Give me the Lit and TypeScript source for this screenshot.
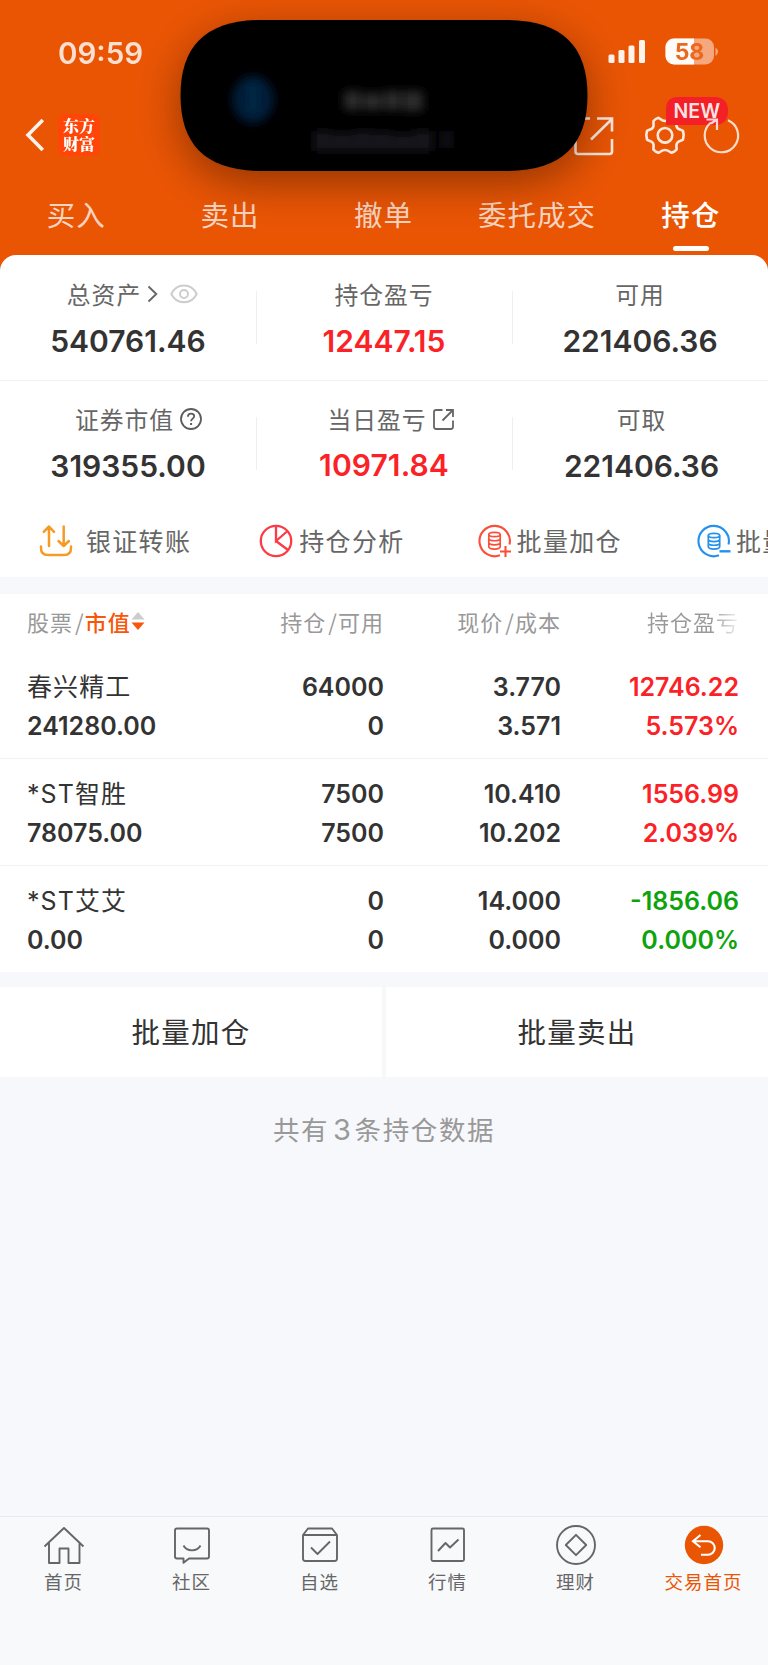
import { LitElement, html, svg, css, TemplateResult } from "lit";
import { customElement, property } from "lit/decorators.js";
import { classMap } from "lit/directives/class-map.js";

const icons: Record<string, TemplateResult> = {
  back: html`<svg width="20" height="34" viewBox="0 0 20 34" fill="none" stroke="#fff" stroke-opacity=".92" stroke-width="3.6"><path d="M17.800 2 3 17l14.800 15" /></svg>`,
  eye: html`<svg width="28" height="20" viewBox="0 0 28 20" fill="none" stroke="#ccc" stroke-width="1.9"><path d="M1.300 10C4 4.500 8.600 1.500 14 1.500S24 4.500 26.700 10C24 15.500 19.400 18.300 14 18.300S4 15.500 1.300 10Z" /><circle cx="14" cy="10" r="4" /></svg>`,
  chevron: html`<svg width="11" height="18" viewBox="0 0 11 18" fill="none" stroke="#666" stroke-width="1.900"><path d="m1.500 1.500 7.800 7.500-7.800 7.500" /></svg>`,
  help: html`<svg width="22" height="22" viewBox="0 0 22 22" fill="none" stroke="#5c5c5c" stroke-width="1.800"><circle cx="11" cy="11" r="10" /><path d="M7.900 8.700c0-1.900 1.300-3.100 3.200-3.100 1.800 0 3.100 1.100 3.100 2.700 0 2.300-3.100 2.400-3.100 4.900" /><path d="M11.100 15v2" stroke-width="2" /></svg>`,
  share: html`<svg width="21" height="21" viewBox="0 0 21 21" fill="none" stroke="#666" stroke-width="1.800"><path d="M9.500 1H3.200Q1 1 1 3.200v14.600Q1 20 3.200 20h14.600q2.200 0 2.200-2.200v-6.300M13 1h7v7M20 1 9.500 11.500" /></svg>`,
  transfer: html`<svg width="34" height="34" viewBox="0 0 34 34" fill="none" stroke="#f79a24" stroke-width="2.500" stroke-linecap="round" stroke-linejoin="round"><path d="M10 22V3M4.800 7.800 10 2.500l5 5.300M24.700 2.500v19M19.500 17l5.200 5 5.200-5M2 22.500v1.500q0 7 7 7h16q7 0 7-7v-1.500" /></svg>`,
  pie: html`<svg width="34" height="34" viewBox="0 0 34 34" fill="none" stroke="#fb3b45" stroke-width="2.300"><circle cx="17" cy="17" r="15.200" /><path d="M17 1.700V17l11.500-10M17 17l12 9" /></svg>`,
  add: html`<svg width="34" height="34" viewBox="0 0 34 34" fill="none" stroke="#f9503c" stroke-width="2.100"><path d="M31.500 20.500A15.200 15.200 0 1 0 22 31.300" /><g stroke-width="1.700"><ellipse cx="16.500" cy="10.500" rx="5.700" ry="2.200" /><path d="M10.800 10.500v12.300c0 3 11.400 3 11.400 0V10.500M10.800 14.500c0 3 11.400 3 11.400 0M10.800 18.600c0 3 11.400 3 11.400 0" /></g><path d="M22 27.500h11M27.500 22v11" /></svg>`,
  minus: html`<svg width="34" height="34" viewBox="0 0 34 34" fill="none" stroke="#2491ee" stroke-width="2.100"><path d="M31.500 20.500A15.200 15.200 0 1 0 22 31.300" /><g stroke-width="1.700"><ellipse cx="17" cy="11.500" rx="5.700" ry="2.200" /><path d="M11.300 11.500v11.300c0 3 11.400 3 11.400 0V11.500M11.300 15.300c0 3 11.400 3 11.400 0M11.300 19c0 3 11.400 3 11.400 0" /></g><path d="M22.500 27.300h11" stroke-width="2.400" /></svg>`,
};

const navIcon = (body: unknown) =>
  html`<svg width="42" height="42" viewBox="0 0 42 42" fill="none" stroke="#666" stroke-width="1.900" stroke-linejoin="round">${body}</svg>`;

const navItems = [
  { label: "首页", icon: navIcon(svg`<path d="M1.500 22.500 21 4l19.500 18.500M6 19v20h10.500V24.500h9V39H36.500V19" />`) },
  { label: "社区", icon: navIcon(svg`<path d="M6 4.500h30q2 0 2 2v26q0 2-2 2H18l-5.500 4.300V34.500H6q-2 0-2-2v-26q0-2 2-2Z" /><path d="M12.500 21.500c3.500 6.500 13.500 6.500 17 0" />`) },
  { label: "自选", icon: navIcon(svg`<path d="M4 11v23.500q0 2.500 2.500 2.500h29q2.500 0 2.500-2.500V11L33 4.500H9L4 11ZM4 11h34" /><path d="m12 23.500 6.500 6.500L31 17.500" />`) },
  { label: "行情", icon: navIcon(svg`<rect x="4.500" y="4.500" width="32.500" height="32.500" rx="1.500" /><path d="m11 27 7.500-8 4.500 4.500 8.500-8" />`) },
  { label: "理财", icon: navIcon(svg`<circle cx="21" cy="21" r="19" /><path d="M21 10.800 31.200 21 21 31.200 10.800 21Z" />`) },
  { label: "交易首页", active: true, icon: html`<svg width="42" height="42" viewBox="0 0 42 42" fill="none" stroke="#fff" stroke-width="2.100"><circle cx="21" cy="21" r="19.200" fill="#ea5504" stroke="none" /><path d="M17.500 11 10 17.300l7.500 6M10.500 17.300H25a6.700 6.700 0 0 1 0 13.500h-7" /></svg>` },
];

@customElement("trade-header")
class TradeHeader extends LitElement {
  static styles = css`
    :host { display: block; position: relative; height: 255px; overflow: hidden; background: #ea5504; color: #fff; }
    .status { display: flex; align-items: center; height: 104px; box-sizing: border-box; padding: 1px 50px 0 58px; font: 600 29.500px/30px Inter, sans-serif; }
    .time { opacity: .82; filter: blur(.6px); flex: 1; }
    .nav { display: flex; align-items: center; height: 62px; padding-left: 25px; }
    .logo { margin-left: 13px; width: 42px; height: 42px; box-sizing: border-box; padding-top: 3px; border-radius: 7px; background: #ff4608; text-align: center; font: 900 16px/18px "Noto Serif CJK SC", "Noto Sans CJK SC", sans-serif; filter: blur(.4px); }
    .tabs { display: grid; grid-template-columns: repeat(5, 1fr); height: 89px; }
    .tab { display: flex; flex-direction: column; align-items: center; padding-top: 29px; font-size: 28.500px; line-height: 38px; letter-spacing: 1px; color: rgba(255,255,255,.76); }
    .tab span { margin-right: 1px; }
    .on { color: #fff; font-weight: 500; }
    .on::after { content: ""; width: 36px; height: 5px; border-radius: 3px; background: #fff; margin-top: 13px; }
    .overlay { position: absolute; inset: 0; pointer-events: none; }
    .battery, .new { font-family: Inter, sans-serif; }
  `;
  render() {
    const tabs = ["买入", "卖出", "撤单", "委托成交", "持仓"];
    return html`
      <div class="status"><span class="time">09:59</span></div>
      <div class="nav">${icons.back}<div class="logo">东方<br />财富</div></div>
      <div class="tabs">
        ${tabs.map((t, i) => html`<div class=${classMap({ tab: true, on: i === 4 })}><span>${t}</span></div>`)}
      </div>
      <svg class="overlay" width="768" height="255" viewBox="0 0 768 255" fill="none">
        <defs>
          <filter id="shade" x="-30%" y="-50%" width="160%" height="200%"><feGaussianBlur stdDeviation="22" /></filter>
          <filter id="soft" x="-20%" y="-20%" width="140%" height="140%"><feGaussianBlur stdDeviation=".6" /></filter>
          <filter id="haze" x="-50%" y="-50%" width="200%" height="200%"><feGaussianBlur stdDeviation="5" /></filter>
          <clipPath id="charge"><rect x="660" y="30" width="34" height="40" /></clipPath>
        </defs>
        <g filter="url(#soft)">
          <g fill="#fff" fill-opacity=".93">
            <rect x="608.500" y="54.500" width="6" height="8.500" rx="1.500" /><rect x="618.500" y="50" width="6" height="13" rx="1.500" />
            <rect x="628.500" y="45.500" width="6" height="17.500" rx="1.500" /><rect x="639" y="40" width="6" height="23" rx="1.500" />
          </g>
          <rect x="665.500" y="38.500" width="48.500" height="26" rx="8.500" fill="#f5a77e" />
          <rect x="665.500" y="38.500" width="48.500" height="26" rx="8.500" fill="#fff" fill-opacity=".95" clip-path="url(#charge)" />
          <path d="M715.500 47.500q5 4 0 8.500Z" fill="#f5a77e" />
          <text class="battery" x="689.500" y="60" text-anchor="middle" font-size="23" font-weight="700" fill="#ec681f">58</text>
        </g>
        <g stroke="#fff" stroke-opacity=".87" stroke-width="2.600">
          <path d="M585 118.500h5M597 118.500h15v13M612 119 591 139.500M612 139v12.500q0 2.500-2.500 2.500H578q-2.500 0-2.500-2.500V140" />
          <path stroke-linejoin="round" d="M658.500 117.800C661 119 661.500 121 665 121S669 119 671.500 117.800C673 118.200 675.500 119.500 676.500 121C677 123 675.500 125 677 127.500C678.500 130 681.500 129.500 683 131Q684.500 135.300 683 139.500C681.500 141 678.500 140.500 677 143.200C675.500 146 677 147.500 676.500 149.700Q674.500 152 671.500 152.800C669 151.800 668.500 150 665 150S661 151.800 658.500 152.800Q655.500 152 653.500 149.700C653 147.500 654.500 146 653 143.200C651.500 140.500 648.500 141 647 139.500Q645.500 135.300 647 131C648.500 129.500 651.500 130 653 127.500C654.500 125 653 123 653.500 121Q655.500 118.700 658.500 117.800Z" />
          <circle cx="665" cy="135.300" r="7.300" />
        </g>
        <path d="M666 125v-16q0-12 12-12h36q14 0 14 14t-14 14Z" fill="#f32028" />
        <text class="new" x="696.800" y="118" text-anchor="middle" font-size="19.500" font-weight="600" fill="#fff" fill-opacity=".9">NEW</text>
        <path d="M728 120.200A16.700 16.700 0 1 1 711 122.500M706.500 119.500h10.500v10.500M717 119.500l-6 4" stroke="#fff" stroke-opacity=".8" stroke-width="2.200" />
        <path d="M180.500 95.500C180.500 46 206 20 262 20H506C562 20 587.500 46 587.500 95.500S562 171 506 171H262C206 171 180.500 145 180.500 95.500Z" fill="#000" fill-opacity=".38" filter="url(#shade)" transform="translate(0 12)" />
        <path d="M180.500 95.500C180.500 46 206 20 262 20H506C562 20 587.500 46 587.500 95.500S562 171 506 171H262C206 171 180.500 145 180.500 95.500Z" fill="#000" />
        <g filter="url(#haze)">
          <ellipse cx="253" cy="99.500" rx="21" ry="24" fill="#001f38" /><path d="M253 84v28" stroke="#002a4a" stroke-width="8" />
          <g fill="#2b2b2b"><rect x="344" y="91" width="17" height="19" /><rect x="363" y="93" width="19" height="17" /><rect x="384" y="91" width="17" height="19" /><rect x="403" y="91" width="20" height="20" /></g>
          <g fill="#19191b"><rect x="314" y="131" width="17" height="20" /><rect x="333" y="133" width="19" height="18" /><rect x="354" y="131" width="18" height="20" /><rect x="374" y="132" width="18" height="19" /><rect x="394" y="134" width="18" height="17" /><rect x="414" y="131" width="18" height="20" /><rect x="443" y="131" width="8" height="17" /></g>
        </g>
      </svg>`;
  }
}

@customElement("asset-summary")
class AssetSummary extends LitElement {
  static styles = css`
    :host { display: block; background: #fff; border-radius: 16px 16px 0 0; }
    .row { display: grid; grid-template-columns: repeat(3, 1fr); height: 125px; box-sizing: border-box; }
    .row + .row { border-top: 1px solid #f1f1f2; height: 122px; }
    .cell { position: relative; display: flex; flex-direction: column; align-items: center; padding-top: 23px; }
    .row + .row .cell { padding-top: 22px; }
    .cell + .cell::before { content: ""; position: absolute; left: 0; top: 36px; height: 53px; width: 1px; background: #efeff0; }
    .label { display: flex; align-items: center; height: 32px; font-size: 23.800px; line-height: 32px; letter-spacing: 1px; color: #666; }
    .label svg { margin-left: 6px; }
    .label svg + svg { margin-left: 12px; }
    .value { margin-top: 13px; font: 600 30px/36px Inter, sans-serif; color: #333; }
    .up { color: #fb2227; }
    .shift { padding-left: 9px; }
    .far { padding-left: 21px; }
    .mid { padding-left: 13px; }
    .raised .value { margin-top: 12px; letter-spacing: .1px; }
    .nudge { padding-left: 3px; }
  `;
  render() {
    return html`
      <div class="row">
        <div class="cell"><div class="label shift">总资产${icons.chevron}${icons.eye}</div><div class="value">540761.46</div></div>
        <div class="cell"><div class="label">持仓盈亏</div><div class="value up">12447.15</div></div>
        <div class="cell"><div class="label">可用</div><div class="value">221406.36</div></div>
      </div>
      <div class="row">
        <div class="cell"><div class="label far">证券市值${icons.help}</div><div class="value">319355.00</div></div>
        <div class="cell raised"><div class="label mid">当日盈亏${icons.share}</div><div class="value up">10971.84</div></div>
        <div class="cell nudge"><div class="label">可取</div><div class="value">221406.36</div></div>
      </div>`;
  }
}

@customElement("quick-actions")
class QuickActions extends LitElement {
  static styles = css`
    :host { display: flex; height: 75px; overflow: hidden; background: #fff; padding-left: 39px; }
    .item { display: flex; align-items: center; flex: 0 0 219.300px; height: 77px; font-size: 25px; letter-spacing: 1.300px; color: #666; white-space: nowrap; }
    .item svg { margin-right: 5px; flex: none; }
    .item span { padding-bottom: 2px; }
    .item:first-child svg { margin-right: 13px; }
    .item:nth-child(2) svg { margin: 0 6px 0 1px; }
  `;
  render() {
    const items = [["transfer", "银证转账"], ["pie", "持仓分析"], ["add", "批量加仓"], ["minus", "批量卖出"]];
    return html`${items.map(([i, t]) => html`<div class="item">${icons[i]}<span>${t}</span></div>`)}`;
  }
}

interface Holding { name: string; value: string; held: string; free: string; price: string; cost: string; gain: string; rate: string; }

@customElement("holdings-table")
class HoldingsTable extends LitElement {
  @property({ attribute: false }) rows: Holding[] = [];
  static styles = css`
    :host { display: block; background: #fff; }
    .head, .row { display: grid; grid-template-columns: 200px 157px 177px 178px; padding-left: 27px; }
    .head { height: 58px; box-sizing: border-box; padding-bottom: 4px; align-items: center; font-size: 22px; letter-spacing: 1px; color: #999; }
    .row { height: 107px; box-sizing: border-box; padding-top: 16px; grid-template-rows: 39px 39px; border-bottom: 1px solid #f0f1f2; font: 600 25px/39px Inter, "Noto Sans CJK SC", sans-serif; color: #333; }
    .row:last-child { border-bottom-color: #f7f8fb; }
    .head .num, .num { text-align: right; }
    .first { display: flex; align-items: center; }
    .slash { margin: 0 0 0 2px; font-size: 22px; }
    .sort { color: #f9560a; font-weight: 500; }
    .name { font-weight: 400; letter-spacing: 1.100px; white-space: nowrap; }
    .up { color: #fb2227; }
    .down { color: #0da30d; }
    .fade { background: linear-gradient(90deg, #999 70%, #fff 104%); background-clip: text; -webkit-background-clip: text; color: transparent; justify-self: end; }
  `;
  render() {
    return html`
      <div class="head">
        <div class="first">股票<span class="slash">/</span><span class="sort">市值</span>
          <svg width="14" height="20" viewBox="0 0 14 20"><path d="m7 1 6.500 7.500H.5Z" fill="#ccc" /><path d="m7 19 6.500-7.500H.5Z" fill="#f9560a" /></svg>
        </div>
        <div class="num">持仓<span class="slash">/</span>可用</div>
        <div class="num">现价<span class="slash">/</span>成本</div>
        <div class="num fade">持仓盈亏</div>
      </div>
      ${this.rows.map((r) => {
        const tone = { num: true, up: !r.gain.startsWith("-"), down: r.gain.startsWith("-") };
        return html`<div class="row">
          <div class="name">${r.name}</div><div class="num">${r.held}</div><div class="num">${r.price}</div><div class=${classMap(tone)}>${r.gain}</div>
          <div>${r.value}</div><div class="num">${r.free}</div><div class="num">${r.cost}</div><div class=${classMap(tone)}>${r.rate}</div>
        </div>`;
      })}`;
  }
}

@customElement("bottom-nav")
class BottomNav extends LitElement {
  static styles = css`
    :host { display: grid; grid-template-columns: repeat(6, 1fr); height: 149px; box-sizing: border-box; border-top: 1px solid #e8e9eb; background: #f8f9fb; }
    .item { display: flex; flex-direction: column; align-items: center; padding-top: 7px; font-size: 18.500px; line-height: 26px; letter-spacing: 1px; color: #666; }
    .item svg { margin-bottom: 2px; }
    .item span { margin-right: 1px; }
    .active { color: #ea5504; }
  `;
  render() {
    return html`${navItems.map((n) => html`<div class=${classMap({ item: true, active: !!n.active })}>${n.icon}<span>${n.label}</span></div>`)}`;
  }
}

@customElement("app-root")
class AppRoot extends LitElement {
  static styles = css`
    :host { display: flex; flex-direction: column; width: 768px; height: 1665px; background: #f7f8fb; font-family: "Noto Sans CJK SC", sans-serif; }
    .card { background: linear-gradient(#ea5504 20px, #fff 20px); }
    .table { margin-top: 17px; }
    .buttons { display: grid; grid-template-columns: 1fr 1fr; gap: 4px; margin-top: 14px; }
    .button { height: 90px; box-sizing: border-box; padding-bottom: 3px; display: flex; align-items: center; justify-content: center; background: #fff; color: #333; font-size: 28.500px; letter-spacing: 1.200px; }
    .total { flex: 1; padding-top: 32px; text-align: center; font-size: 26.500px; line-height: 40px; letter-spacing: 1.600px; color: #999; }
    .count { font: 400 29px Inter, sans-serif; margin: 0 2px 0 4px; }
  `;
  rows: Holding[] = [
    { name: "春兴精工", value: "241280.00", held: "64000", free: "0", price: "3.770", cost: "3.571", gain: "12746.22", rate: "5.573%" },
    { name: "*ST智胜", value: "78075.00", held: "7500", free: "7500", price: "10.410", cost: "10.202", gain: "1556.99", rate: "2.039%" },
    { name: "*ST艾艾", value: "0.00", held: "0", free: "0", price: "14.000", cost: "0.000", gain: "-1856.06", rate: "0.000%" },
  ];
  render() {
    return html`
      <trade-header></trade-header>
      <div class="card"><asset-summary></asset-summary></div>
      <quick-actions></quick-actions>
      <holdings-table class="table" .rows=${this.rows}></holdings-table>
      <div class="buttons"><div class="button">批量加仓</div><div class="button">批量卖出</div></div>
      <div class="total">共有<span class="count">3</span>条持仓数据</div>
      <bottom-nav></bottom-nav>`;
  }
}
